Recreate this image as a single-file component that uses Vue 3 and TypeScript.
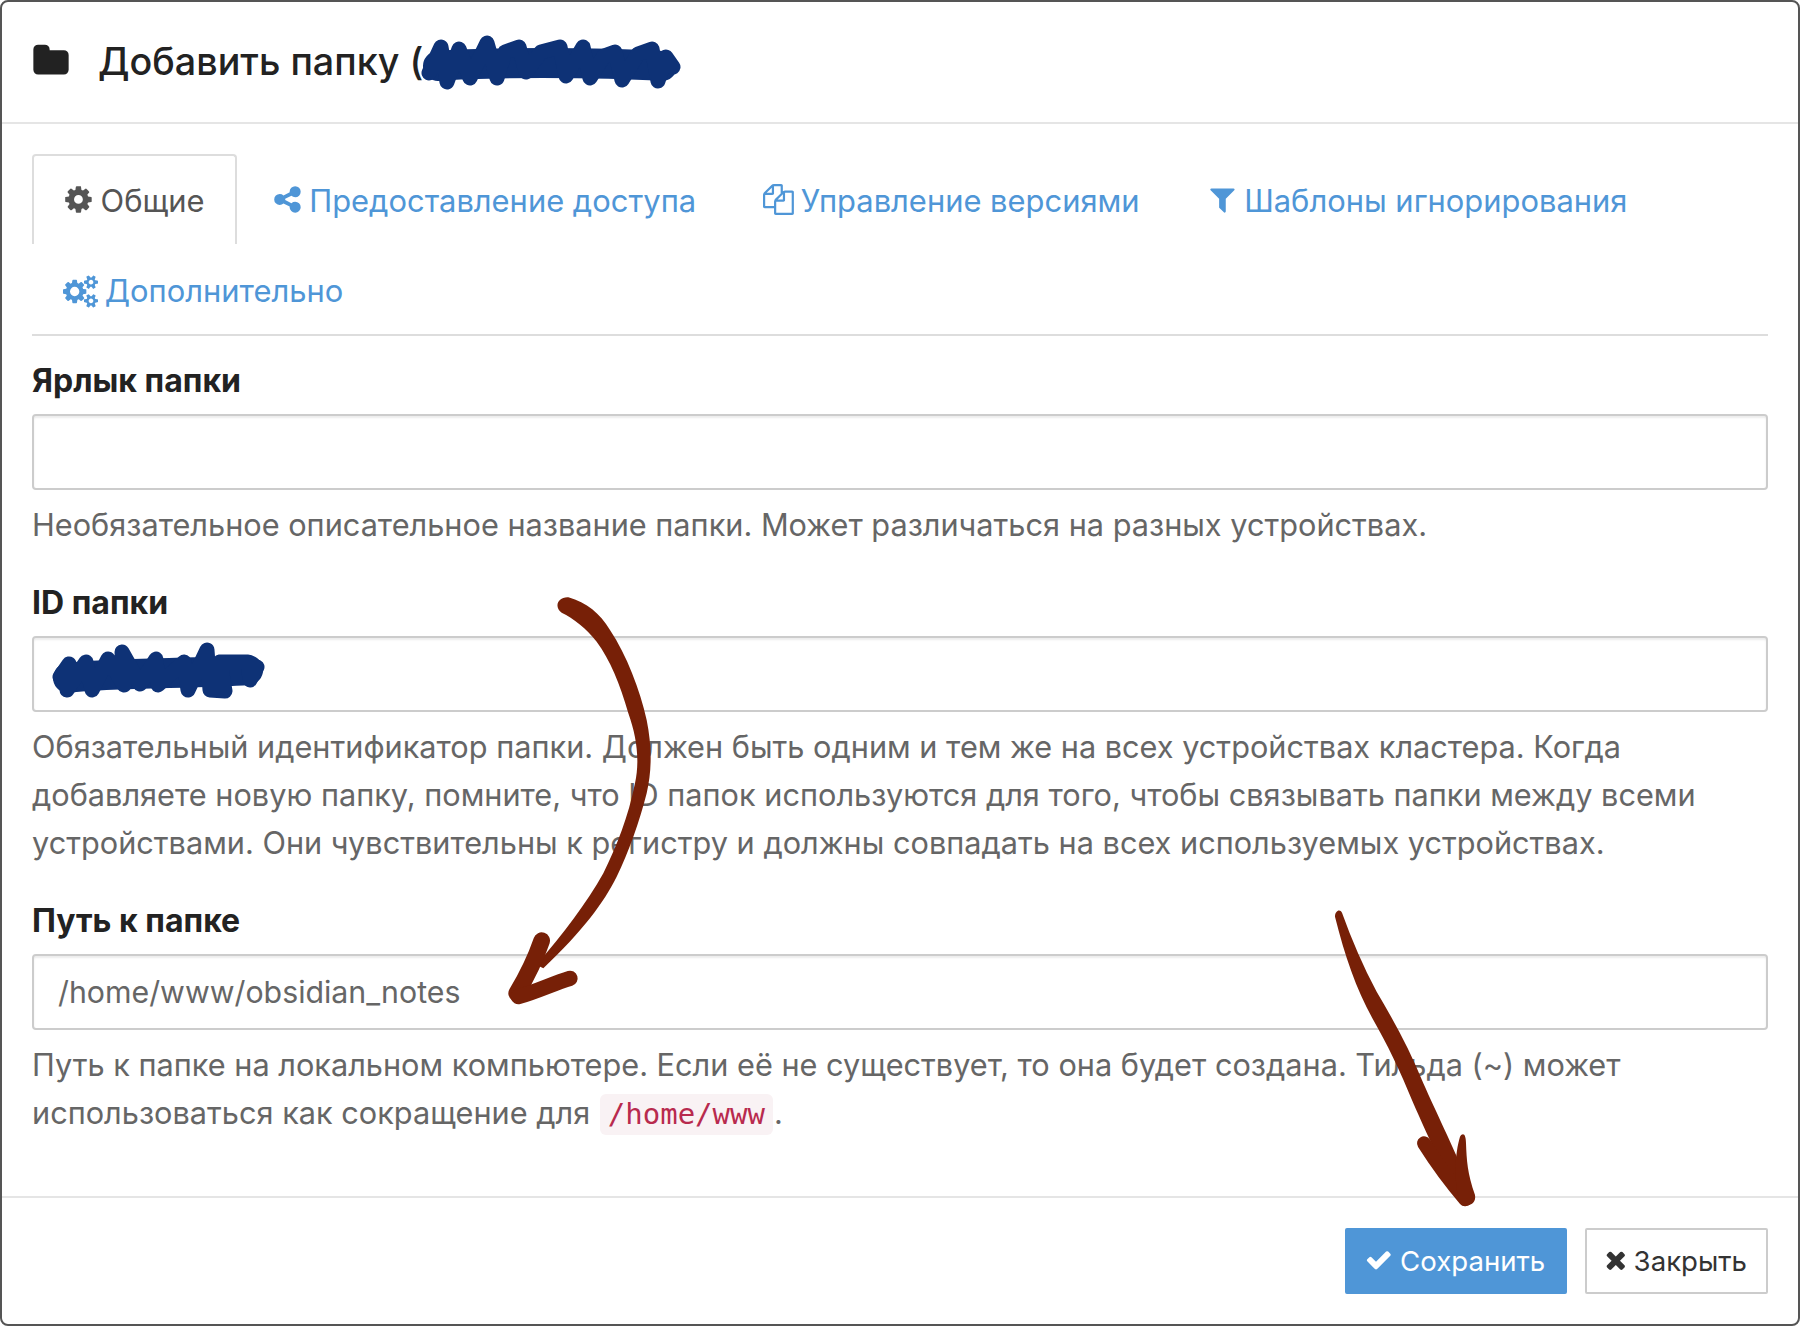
<script setup lang="ts">
const tabs = [
  { id: 'share', label: 'Предоставление доступа' },
  { id: 'files', label: 'Управление версиями' },
  { id: 'filter', label: 'Шаблоны игнорирования' },
]
</script>

<template>
  <div class="page">
    <div class="modal">
      <header class="head">
        <svg class="ic-folder" viewBox="0 0 1792 1792"><path d="M1728 608v704q0 92-66 158t-158 66h-1216q-92 0-158-66t-66-158v-960q0-92 66-158t158-66h320q92 0 158 66t66 158v32h672q92 0 158 66t66 158z"/></svg>
        <h4>Добавить папку (</h4>
      </header>
      <div class="body">
        <nav class="tabs">
          <a class="tab active">
            <svg class="ic" viewBox="0 0 1792 1792"><path d="M1152 896q0-106-75-181t-181-75-181 75-75 181 75 181 181 75 181-75 75-181zm512-109v222q0 12-8 23t-20 13l-185 28q-19 54-39 91 35 50 107 138 10 12 10 25t-9 23q-27 37-99 108t-94 71q-12 0-26-9l-138-108q-44 23-91 38-16 136-29 186-7 28-36 28h-222q-14 0-24.5-8.5t-11.5-21.5l-28-184q-49-16-90-37l-141 107q-10 9-25 9-14 0-25-11-126-114-165-168-7-10-7-23 0-12 8-23 15-21 51-66.5t54-70.5q-27-50-41-99l-183-27q-13-2-21-12.5t-8-23.5v-222q0-12 8-23t19-13l186-28q14-46 39-92-40-57-107-138-10-12-10-24 0-10 9-23 26-36 98.5-107.5t94.5-71.5q13 0 26 10l138 107q44-23 91-38 16-136 29-186 7-28 36-28h222q14 0 24.5 8.5t11.5 21.5l28 184q49 16 90 37l142-107q9-9 24-9 13 0 25 10 129 119 165 170 7 8 7 22 0 12-8 23-15 21-51 66.5t-54 70.5q26 50 41 98l183 28q13 2 21 12.5t8 23.5z"/></svg>
            Общие
          </a>
          <a v-for="t in tabs" :key="t.id" class="tab">
            <svg v-if="t.id === 'share'" class="ic" viewBox="0 0 1792 1792"><path d="M1344 1024q133 0 226.5 93.5t93.5 226.5-93.5 226.5-226.5 93.5-226.5-93.5-93.5-226.5q0-12 2-34l-360-180q-92 86-218 86-133 0-226.5-93.5t-93.5-226.5 93.5-226.5 226.5-93.5q126 0 218 86l360-180q-2-22-2-34 0-133 93.5-226.5t226.5-93.5 226.5 93.5 93.5 226.5-93.5 226.5-226.5 93.5q-126 0-218-86l-360 180q2 22 2 34t-2 34l360 180q92-86 218-86z"/></svg>
            <svg v-else-if="t.id === 'files'" class="ic" viewBox="0 0 1792 1792"><path d="M1696 384q40 0 68 28t28 68v1216q0 40-28 68t-68 28h-960q-40 0-68-28t-28-68v-288h-544q-40 0-68-28t-28-68v-672q0-40 20-88t48-76l408-408q28-28 76-48t88-20h416q40 0 68 28t28 68v328q68-40 128-40h416zm-544 213l-299 299h299v-299zm-640-384l-299 299h299v-299zm196 647l316-316v-416h-384v416q0 40-28 68t-68 28h-416v640h512v-256q0-40 20-88t48-76zm956 804v-1152h-384v416q0 40-28 68t-68 28h-416v640h896z"/></svg>
            <svg v-else class="ic" viewBox="0 0 1792 1792"><path d="M1595 295q17 41-14 70l-493 493v742q0 42-39 59-13 5-25 5-27 0-45-19l-256-256q-19-19-19-45v-486l-493-493q-31-29-14-70 17-39 59-39h1280q42 0 59 39z"/></svg>
            {{ t.label }}
          </a>
          <a class="tab">
            <svg class="ic ic-cogs" viewBox="0 0 1920 1792"><path d="M896 896q0-106-75-181t-181-75-181 75-75 181 75 181 181 75 181-75 75-181zm768 512q0-52-38-90t-90-38-90 38-38 90q0 53 37.5 90.5t90.5 37.5 90.5-37.5 37.5-90.5zm0-1024q0-52-38-90t-90-38-90 38-38 90q0 53 37.5 90.5t90.5 37.5 90.5-37.5 37.5-90.5zm-384 421v185q0 10-7 19.5t-16 10.5l-155 24q-11 35-32 76 34 48 90 115 7 11 7 20 0 12-7 19-23 30-82.5 89.5t-78.5 59.5q-11 0-21-7l-115-90q-37 19-77 31-11 108-23 155-7 24-30 24h-186q-11 0-20-7.5t-10-17.5l-23-153q-34-10-75-31l-118 89q-7 7-20 7-11 0-21-8-144-133-144-160 0-9 7-19 10-14 41-53t47-61q-23-44-35-82l-152-24q-10-1-17-9.5t-7-19.5v-185q0-10 7-19.5t16-10.5l155-24q11-35 32-76-34-48-90-115-7-11-7-20 0-12 7-20 22-30 82-89t79-59q11 0 21 7l115 90q34-18 77-32 11-108 23-154 7-24 30-24h186q11 0 20 7.5t10 17.5l23 153q34 10 75 31l118-89q8-7 20-7 11 0 21 8 144 133 144 160 0 8-7 19-12 16-42 54t-45 60q23 48 34 82l152 23q10 2 17 10.5t7 19.5zm640 533v140q0 16-149 31-12 27-30 52 51 113 51 138 0 4-4 7-122 71-124 71-8 0-46-47t-52-68q-20 2-30 2t-30-2q-14 21-52 68t-46 47q-2 0-124-71-4-3-4-7 0-25 51-138-18-25-30-52-149-15-149-31v-140q0-16 149-31 13-29 30-52-51-113-51-138 0-4 4-7 4-2 35-20t59-34 30-16q8 0 46 46.5t52 67.5q20-2 30-2t30 2q51-71 92-112l6-2q4 0 124 70 4 3 4 7 0 25-51 138 17 23 30 52 149 15 149 31zm0-1024v140q0 16-149 31-12 27-30 52 51 113 51 138 0 4-4 7-122 71-124 71-8 0-46-47t-52-68q-20 2-30 2t-30-2q-14 21-52 68t-46 47q-2 0-124-71-4-3-4-7 0-25 51-138-18-25-30-52-149-15-149-31v-140q0-16 149-31 13-29 30-52-51-113-51-138 0-4 4-7 4-2 35-20t59-34 30-16q8 0 46 46.5t52 67.5q20-2 30-2t30 2q51-71 92-112l6-2q4 0 124 70 4 3 4 7 0 25-51 138 17 23 30 52 149 15 149 31z"/></svg>
            Дополнительно
          </a>
        </nav>

        <div class="group">
          <label>Ярлык папки</label>
          <div class="input"></div>
          <p class="help">Необязательное описательное название папки. Может различаться на разных устройствах.</p>
        </div>
        <div class="group">
          <label>ID папки</label>
          <div class="input"></div>
          <p class="help">Обязательный идентификатор папки. Должен быть одним и тем же на всех устройствах кластера. Когда добавляете новую папку, помните, что ID папок используются для того, чтобы связывать папки между всеми устройствами. Они чувствительны к регистру и должны совпадать на всех используемых устройствах.</p>
        </div>
        <div class="group">
          <label>Путь к папке</label>
          <div class="input path">/home/www/obsidian_notes</div>
          <p class="help">Путь к папке на локальном компьютере. Если её не существует, то она будет создана. Тильда (~) может использоваться как сокращение для <code>/home/www</code>.</p>
        </div>
      </div>
      <footer class="foot">
        <button class="btn primary">
          <svg class="ic" viewBox="0 0 1792 1792"><path d="M1671 566q0 40-28 68l-724 724-136 136q-28 28-68 28t-68-28l-136-136-362-362q-28-28-28-68t28-68l136-136q28-28 68-28t68 28l294 295 656-657q28-28 68-28t68 28l136 136q28 28 28 68z"/></svg>
          Сохранить
        </button>
        <button class="btn close">
          <svg class="ic" viewBox="0 0 1792 1792"><path d="M1490 1322q0 40-28 68l-136 136q-28 28-68 28t-68-28l-294-294-294 294q-28 28-68 28t-68-28l-136-136q-28-28-28-68t28-68l294-294-294-294q-28-28-28-68t28-68l136-136q28-28 68-28t68 28l294 294 294-294q28-28 68-28t68 28l136 136q28 28 28 68t-28 68l-294 294 294 294q28 28 28 68z"/></svg>
          Закрыть
        </button>
      </footer>
    </div>

    <svg class="marks" viewBox="0 0 1800 1326">
      <path class="scribble core" d="M438 66 C480 62 600 62 662 66"/>
      <path class="scribble" d="M429 73 L441 47 L447 82 L459 49 L470 78 L487 43 L497 78 L505 52 L519 47 L526 72 L541 52 L560 47 L566 76 L583 47 L590 78 L604 56 L615 52 L622 80 L638 54 L652 49 L658 81 L666 57 L673 67"/>
      <path class="scribble core" d="M68 678 C110 672 200 674 248 670"/>
      <path class="scribble" d="M60 677 L69 664 L67 690 L86 662 L92 690 L108 659 L124 685 L122 652 L140 684 L156 659 L158 685 L184 662 L188 690 L207 650 L210 690 L225 691 L220 662 L248 662 L250 680 L257 667"/>

      <g class="brown" transform="translate(500 580) scale(.33333)">
        <path class="fill" d="M205 52 C260 68 300 100 330 150 C380 225 420 330 440 420 C456 500 456 570 440 640 C420 720 385 820 350 890 C310 970 250 1050 130 1165 L110 1155 C190 1060 260 970 310 880 C350 800 385 710 405 610 C420 540 410 470 385 400 C360 310 330 240 290 185 C260 145 220 115 185 98 C160 80 175 50 205 52 Z"/>
        <path class="s1" d="M125 1082 C105 1140 80 1190 50 1240"/>
        <path class="s2" d="M210 1195 C160 1210 110 1235 55 1250"/>
      </g>

      <g class="brown" transform="translate(1280 880) scale(.33333)">
        <path class="fill" d="M186 98 C215 180 250 260 290 335 C340 420 390 510 430 610 C470 700 510 780 570 920 L545 975 C480 850 440 760 400 670 C360 570 320 490 280 420 C230 330 195 230 165 110 C165 92 180 85 186 98 Z"/>
        <path class="s3" d="M432 790 C470 850 510 905 556 958"/>
        <path class="fill" d="M540 770 C550 755 558 765 558 790 C560 840 562 880 585 945 C590 970 565 985 540 970 C520 900 525 820 540 770 Z"/>
      </g>
    </svg>
  </div>
</template>

<style>
html, body { margin: 0; background: #fff; }
</style>

<style scoped>
.page {
  position: relative;
  width: 1800px;
  height: 1326px;
  overflow: hidden;
  font-family: Inter, "Liberation Sans", sans-serif;
  font-size: 30.9px;
  line-height: 48px;
  color: #666;
}
.modal {
  box-sizing: border-box;
  width: 1800px;
  height: 1326px;
  display: flex;
  flex-direction: column;
  background: #fff;
  border: 2px solid #555;
  border-radius: 8px;
}
.head {
  display: flex;
  align-items: center;
  height: 122px;
  flex: none;
  box-sizing: border-box;
  padding: 0 0 2px 30px;
  border-bottom: 2px solid #e5e5e5;
}
.head h4 {
  margin: 0 0 0 28px;
  font-size: 37.7px;
  font-weight: 500;
  color: #222;
}
.ic-folder { width: 38px; height: 38px; fill: #222; }
.ic { width: 1em; height: 1em; fill: currentColor; vertical-align: -3px; }
.ic-cogs { width: 35px; height: 33px; vertical-align: -6px; }
.body { flex: 1; padding: 30px 30px 0; }
.tabs {
  display: flex;
  flex-wrap: wrap;
  border-bottom: 2px solid #ddd;
  width: 1736px;
}
.tab {
  box-sizing: border-box;
  height: 90px;
  padding: 23px 32px;
  margin-right: 4px;
  color: #4f96d7;
  white-space: nowrap;
}
.tab .ic { margin: 0 -2px 0 -1px; }
.tab.active {
  color: #555;
  border: 2px solid #ddd;
  border-bottom: 0;
  border-radius: 4px 4px 0 0;
  padding: 21px 30px;
}
.group { margin-bottom: 24px; }
label {
  display: block;
  font-size: 32px;
  font-weight: 700;
  color: #222;
  margin-top: 21px;
  height: 48px;
}
.group + .group label { margin-top: 30px; }
.input {
  box-sizing: border-box;
  width: 1736px;
  height: 76px;
  margin-top: 9px;
  padding: 12px 24px;
  border: 2px solid #ccc;
  border-radius: 4px;
  box-shadow: inset 0 2px 2px rgba(0, 0, 0, .075);
}
.input.path { font-size: 30.3px; }
.help { margin: 11px 0 0; width: 1736px; font-size: 30.7px; }
code {
  display: inline-block;
  font-family: "DejaVu Sans Mono", "Liberation Mono", monospace;
  font-size: 29px;
  line-height: 41px;
  color: #b82a4e;
  background: #f9f2f4;
  border-radius: 6px;
  padding: 0 8px;
  margin: 0 1px;
}
.foot {
  display: flex;
  justify-content: flex-end;
  align-items: flex-start;
  gap: 18px;
  height: 128px;
  flex: none;
  box-sizing: border-box;
  padding: 30px 30px 0 0;
  border-top: 2px solid #e5e5e5;
}
.btn {
  font: inherit;
  height: 66px;
  padding: 0 20px;
  background: #fff;
  color: #333;
  border: 2px solid #ccc;
  border-radius: 2px;
  font-size: 27.6px;
}
.btn .ic { margin-left: -2px; }
.btn.close { padding: 0 19px; }
.btn.close .ic { margin: 0 -4px; }
.btn.primary { background: #4f96d7; border-color: #4f96d7; color: #fff; }
.marks { position: absolute; inset: 0; width: 1800px; height: 1326px; pointer-events: none; }
.scribble { fill: none; stroke: #0e3276; stroke-width: 15; stroke-linejoin: round; stroke-linecap: round; }
.scribble.core { stroke-width: 30; }
.fill { fill: #772007; }
.brown path { stroke-linecap: round; }
.s1, .s2, .s3 { fill: none; stroke: #772007; }
.s1 { stroke-width: 50; }
.s2 { stroke-width: 46; }
.s3 { stroke-width: 42; }
</style>
